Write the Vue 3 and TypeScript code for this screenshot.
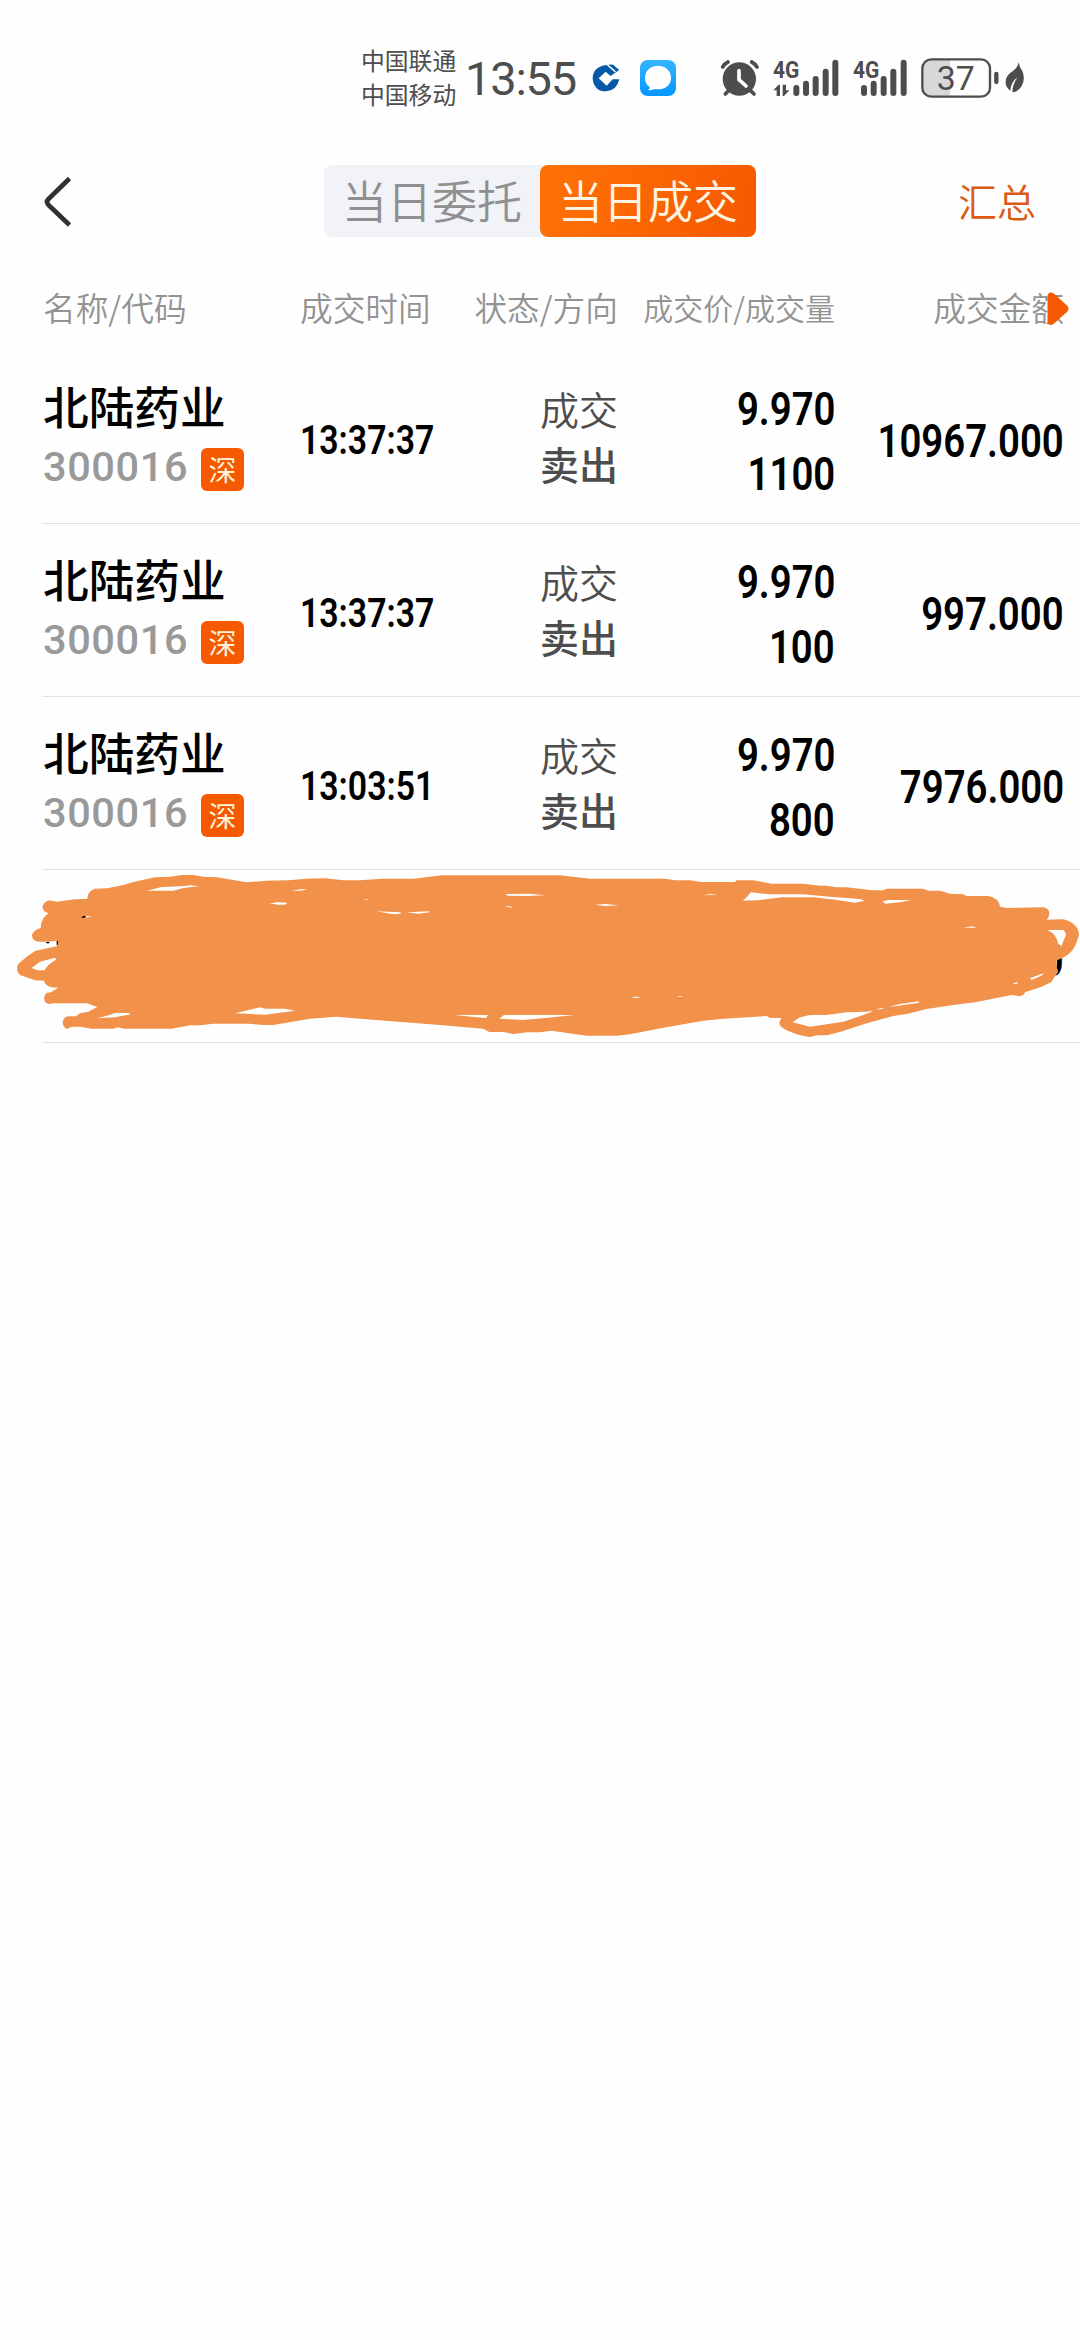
<script setup lang="ts">
interface Trade {
  name: string
  code: string
  market: string
  time: string
  state: string
  side: string
  price: string
  volume: string
  amount: string
}

const trades: Trade[] = [
  { name: '北陆药业', code: '300016', market: '深', time: '13:37:37', state: '成交', side: '卖出', price: '9.970', volume: '1100', amount: '10967.000' },
  { name: '北陆药业', code: '300016', market: '深', time: '13:37:37', state: '成交', side: '卖出', price: '9.970', volume: '100', amount: '997.000' },
  { name: '北陆药业', code: '300016', market: '深', time: '13:03:51', state: '成交', side: '卖出', price: '9.970', volume: '800', amount: '7976.000' },
]

const outline =
  'M170 155L225 148L262 147Q262 122 285 116L322 115L370 105L400 96L465 82L510 80L545 75H580L610 80L650 82L740 97L800 92L865 91L920 86L975 85L1030 91H1080L1145 86H1240L1325 76H1680L1770 86H1995L2025 91H2070L2105 96H2205L2210 91H2260L2315 101H2410L2460 107H2480L2510 112H2540L2615 121H2650L2660 116H2770L2785 122H2820L2850 131L2890 133L2900 138H2965Q2998 145 3000 170L3020 174L3130 172Q3148 175 3148 192Q3147 203 3140 209L3190 208Q3235 220 3237 255Q3225 300 3205 313Q3190 325 3168 332Q3168 350 3175 365Q3160 385 3155 395L3125 410L3075 427Q3070 440 3055 438L3035 435L2925 457L2860 465L2780 477L2720 492L2680 498L2600 520L2520 546L2480 556H2450L2430 561L2410 558Q2340 540 2338 520Q2340 508 2345 504H2310L2300 498L2160 507L2110 512L1990 533L1890 553L1850 557H1760L1655 542L1620 547H1580L1560 550L1540 552L1510 546H1468L1450 536L1310 524L1080 506L1010 500L930 506L820 525H790L745 521H640L600 526H570L515 536H370L355 532L340 536H275L240 530H215L200 537Q188 530 188 517Q190 500 207 499H228L240 490L265 485L292 471L260 460H160Q135 468 132 445Q135 425 150 428L175 413L155 412Q133 405 132 392L105 391L60 375Q45 360 55 342L80 320L105 303L172 288L175 272Q140 275 130 275Q95 278 96 255Q100 240 122 234Q122 205 146 190Q125 185 128 168Q135 150 155 152Z'

const gaps = [
  'M95 354L120 335L165 323L168 329Q140 345 134 361H112Z',
  'M440 122L485 111L545 109L570 106L598 109L550 114L520 122Z',
  'M875 122L905 117L922 119L900 122Z',
  'M808 160L835 157L862 158L855 164H835Z',
  'M292 505L325 496L345 489H385L392 493L345 502Z',
  'M705 490L780 472L795 476H855L885 482L795 494Z',
  'M1088 148H1107L1100 150Z',
  'M1515 132L1590 131L1635 136L1575 138L1525 137Z',
  'M1513 170L1530 168L1539 173Z',
  'M1785 164L1815 162L1857 166L1815 168Z',
  'M1130 184L1200 187L1205 190L1190 193L1170 191Z',
  'M1220 187L1285 184L1290 187L1255 191Z',
  'M1363 495H1464L1458 504L1430 502Z',
  'M1512 495H1722L1660 502L1570 510L1498 506Z',
  'M2108 136L2130 132L2152 134Z',
  'M1890 442L1905 440H1922L1912 444Z',
  'M2030 438L2050 439L2040 441Z',
  'M2228 152Q2245 140 2252 127L2310 133H2410L2490 140L2580 147L2595 152L2565 158L2510 150L2440 142H2345L2270 151Z',
  'M2648 154L2665 150H2735L2700 157L2655 161Z',
  'M2890 233L2915 229L2932 233Z',
  'M3145 240H3190Q3203 250 3195 262Q3188 280 3182 292L3174 280Q3168 250 3145 242Z',
  'M3090 385L3130 370L3128 375L3095 390Z',
  'M3038 401L3055 395L3050 402Z',
  'M2378 517L2400 502L2430 495H2480L2540 487L2600 485L2640 478L2700 462L2755 454L2758 458L2690 468L2640 475L2590 495L2530 515L2480 523L2430 530Z',
]

const scribble = [outline, ...gaps].join('')
</script>

<template>
  <div class="screen">
    <header class="status">
      <div class="carriers">
        <span>中国联通</span>
        <span>中国移动</span>
      </div>
      <div class="clock">13:55</div>
      <svg class="apps" width="90" height="90" viewBox="750 0 270 270">
        <defs>
          <linearGradient id="msg" x1="0" y1="0" x2="0" y2="1">
            <stop offset="0" stop-color="#35b4ff" />
            <stop offset="1" stop-color="#0496ff" />
          </linearGradient>
        </defs>
        <path fill="#0659a8" fill-rule="evenodd" d="M800 105Q758 110 758 146Q762 184 799 184Q830 182 838 148H818L800 167L776 145L797 125L812 138L836 121L817 104H806L828 124L824 127L803 108Z" />
        <path fill="#0659a8" d="M806 104H819L837 119L831 124Z" />
        <rect x="900" y="90" width="108" height="108" rx="23" fill="url(#msg)" />
        <path fill="#fff" d="M954 107C931 107 915 122 915 143C915 156 921 166 929 171Q930 177 924 181Q938 181 944 177C972 182 993 167 993 143C993 122 977 107 954 107Z" />
      </svg>
      <svg class="alarm" width="50" height="90" viewBox="45 0 150 270">
        <g fill="none" stroke="#4d4d4d" stroke-width="11" stroke-linecap="round">
          <path d="M68 111Q74 101 84 96M155 96Q165 101 171 111M86 182L76 192M152 182L162 192" />
        </g>
        <circle cx="118" cy="147" r="50" fill="#4d4d4d" />
        <path d="M117 122V149L138 168" fill="none" stroke="#fff" stroke-width="11" stroke-linecap="round" stroke-linejoin="round" />
      </svg>
      <svg class="signal" width="72" height="90" viewBox="210 0 216 270">
        <text x="219" y="144" textLength="79" lengthAdjust="spacingAndGlyphs">4G</text>
        <path d="M240 198V164H236L220 181H230V198ZM248 164V198H252L268 181H258V164Z" fill="#4d4d4d" />
        <path class="bars" d="M289 174V189M318 161V189M347 147V189M377 125V189M406 98V189" />
      </svg>
      <svg class="signal second" width="66" height="90" viewBox="450 0 198 270">
        <text x="459" y="144" textLength="79" lengthAdjust="spacingAndGlyphs">4G</text>
        <path class="bars" d="M492 174V189M521 161V189M551 147V189M580 125V189M611 98V189" />
      </svg>
      <svg class="battery" width="84" height="90" viewBox="654 0 252 270">
        <path d="M690 88H750V200H690Q667 198 667 176V112Q667 90 690 88Z" fill="#d8d8d8" />
        <rect x="667" y="88" width="203" height="112" rx="27" fill="none" stroke="#4d4d4d" stroke-width="7" />
        <text x="710" y="180" textLength="114" lengthAdjust="spacingAndGlyphs">37</text>
        <path d="M889 132V156" stroke="#4d4d4d" stroke-width="13" stroke-linecap="round" />
      </svg>
      <svg class="leaf" width="24" height="90" viewBox="910 0 72 270">
        <path fill="#4d4d4d" d="M957 97Q959 112 968 123Q978 146 966 168Q956 186 939 187Q936 170 953 142Q933 158 932 182Q914 168 919 148Q922 134 939 124Q955 113 957 97Z" />
      </svg>
    </header>

    <nav class="nav">
      <svg class="back" width="40" height="60" viewBox="0 0 40 60">
        <path d="M29.500 7.500L8.500 28Q5.500 31 8.500 34L29.500 54" fill="none" stroke="#303133" stroke-width="4.600" />
      </svg>
      <div class="tabs">
        <span class="tab">当日委托</span>
        <span class="tab active">当日成交</span>
      </div>
      <span class="summary">汇总</span>
    </nav>

    <div class="grid head">
      <span>名称/代码</span>
      <span class="h-time">成交时间</span>
      <span class="right">状态/方向</span>
      <span class="right small">成交价/成交量</span>
      <span class="right">成交金额</span>
      <svg class="more" width="22" height="34" viewBox="0 0 22 34">
        <path d="M0.500 4Q1 0.500 4 0.500Q6 0.500 8 2.500L20 13.500Q23 16.500 20 20L7 31.500Q5 33 3 33Q0.500 32.500 0.500 29.500Z" fill="#f65a00" />
      </svg>
    </div>

    <main>
      <div v-for="(t, i) in trades" :key="i" class="grid row">
        <div class="stock">
          <span class="name">{{ t.name }}</span>
          <span class="code">{{ t.code }}<i class="market">{{ t.market }}</i></span>
        </div>
        <span class="din time">{{ t.time }}</span>
        <div class="state">
          <span>{{ t.state }}</span>
          <b>{{ t.side }}</b>
        </div>
        <div class="deal">
          <span class="din num">{{ t.price }}</span>
          <span class="din num">{{ t.volume }}</span>
        </div>
        <span class="din num amount">{{ t.amount }}</span>
      </div>
      <div class="grid row masked">
        <span class="din num amount last">0</span>
        <svg class="scribble" width="1080" height="210" viewBox="0 0 3240 630">
          <path d="M136 277L150 275L144 281ZM170 272H175V288L170 285ZM3172 281L3182 288L3176 294Z" fill="#000" />
          <path :d="scribble" fill="#f2914a" fill-rule="evenodd" />
          <path d="M243 203L250 198H258L254 203Z" fill="#000" />
          <path d="M258 198L276 199L258 203Z" fill="#fff" />
        </svg>
      </div>
    </main>
  </div>
</template>

<style>
body {
  background: #fefefe;
}
</style>

<style scoped>
.screen {
  width: 1080px;
  height: 2340px;
  overflow: hidden;
  background: #fefefe;
  font-family: 'Noto Sans CJK SC', sans-serif;
  color: #000;
}
.status {
  display: flex;
  height: 120px;
  padding: 30px 0 0 361px;
  box-sizing: border-box;
  color: #4d4d4d;
}
.status svg {
  flex: none;
}
.carriers {
  display: flex;
  flex-direction: column;
  width: 104px;
  padding-top: 13px;
  font-size: 23.800px;
  line-height: 34px;
  font-weight: 400;
}
.clock {
  width: 115px;
  padding-top: 19px;
  font: 400 47px/60px Roboto, sans-serif;
  letter-spacing: -1.2px;
}
.apps {
  margin-left: 10px;
}
.alarm {
  margin-left: 35px;
}
.signal {
  margin-left: 5px;
}
.second {
  margin-left: 8px;
}
.signal text {
  font: 700 72px Roboto, sans-serif;
  fill: #4d4d4d;
}
.bars {
  fill: none;
  stroke: #4d4d4d;
  stroke-width: 18px;
  stroke-linecap: round;
}
.battery {
  margin-left: 2px;
}
.battery text {
  font: 400 100px Roboto, sans-serif;
  fill: #4d4d4d;
}
.leaf {
  margin-left: 1px;
}
.nav {
  display: flex;
  align-items: center;
  height: 162px;
  padding: 0 44px 0 40px;
}
.back {
  margin-right: 244px;
}
.tabs {
  display: flex;
  width: 432px;
  height: 72px;
  border-radius: 8px;
  background: #f2f3f8;
}
.tab {
  flex: 1;
  text-align: center;
  font-size: 45px;
  line-height: 69px;
  font-weight: 350;
  color: #909090;
}
.tab.active {
  border-radius: 8px;
  background: linear-gradient(105deg, #ff7206, #f65800);
  color: #fff4e4;
}
.summary {
  margin: 0 0 3px auto;
  font-size: 39px;
  line-height: 60px;
  font-weight: 350;
  color: #dc5a14;
}
.grid {
  display: grid;
  grid-template-columns: 257px 146px 172px 217px 229px;
  align-items: center;
  margin-left: 43px;
}
.head {
  position: relative;
  height: 68px;
  margin-top: -9px;
  padding-bottom: 10px;
  font-size: 32.700px;
  line-height: 68px;
  font-weight: 350;
  color: #939393;
  white-space: nowrap;
}
.small {
  font-size: 30px;
}
.right {
  display: flex;
  justify-content: flex-end;
}
.more {
  position: absolute;
  left: 1004px;
  top: 19px;
}
.row {
  height: 172px;
  border-bottom: 1px solid #e0e0e0;
}
.stock,
.state,
.deal {
  display: flex;
  flex-direction: column;
}
.name {
  margin-top: -4px;
  padding-bottom: 4px;
  font-size: 45.700px;
  line-height: 60px;
  font-weight: 500;
}
.code {
  display: flex;
  align-items: center;
  height: 56px;
  font: 500 41.500px/56px Roboto, sans-serif;
  letter-spacing: 0.600px;
  color: #999;
}
.market {
  width: 43px;
  height: 43px;
  margin: 4px 0 0 13px;
  border-radius: 6px;
  background: #f65a00;
  color: #fff2dc;
  text-align: center;
  font: 400 28px/42px 'Noto Sans CJK SC', sans-serif;
  letter-spacing: 0;
}
.din {
  font-family: Roboto, sans-serif;
  font-weight: 600;
  white-space: nowrap;
}
.time {
  padding-top: 8px;
  font-size: 40px;
  line-height: 48px;
  transform: scaleX(0.845);
  transform-origin: left center;
}
.num {
  font-size: 46.500px;
  line-height: 65px;
  transform: scaleX(0.825);
  transform-origin: right center;
}
.state {
  align-items: flex-end;
  padding-bottom: 3px;
  font-size: 39px;
  line-height: 55px;
  font-weight: 350;
  color: #4d4d4d;
}
.state b {
  font-weight: 500;
}
.deal {
  align-items: flex-end;
  padding-top: 9px;
}
.amount {
  justify-self: end;
  padding-top: 8px;
}
.last {
  grid-column: 5;
}
.masked {
  position: relative;
}
.scribble {
  position: absolute;
  left: -43px;
  top: -20px;
}
</style>
